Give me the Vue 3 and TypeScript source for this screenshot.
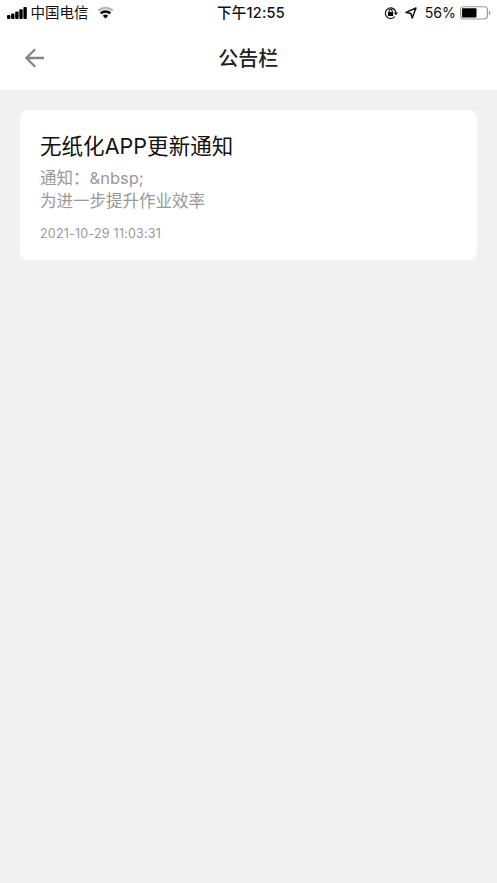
<script setup lang="ts">
interface Notice {
  title: string
  lines: string[]
  time: string
}

const status = { carrier: '中国电信', clock: '下午12:55', battery: '56%' }
const pageTitle = '公告栏'
const notices: Notice[] = [
  {
    title: '无纸化APP更新通知',
    lines: ['通知：&nbsp;', '为进一步提升作业效率'],
    time: '2021-10-29 11:03:31',
  },
]
</script>

<template>
  <div class="screen">
    <header class="top">
      <div class="status">
        <div class="side">
          <svg class="signal" width="20" height="12" viewBox="0 0 20 12">
            <rect x="0" y="8" width="3.4" height="4" rx="1" />
            <rect x="4.1" y="6.4" width="3.4" height="5.6" rx="1" />
            <rect x="8.2" y="4.4" width="3.4" height="7.6" rx="1" />
            <rect x="12.3" y="2.3" width="3.4" height="9.7" rx="1" />
            <rect x="16.4" y="0" width="3.4" height="12" rx="1" />
          </svg>
          <span class="carrier">{{ status.carrier }}</span>
          <svg class="wifi" width="17" height="13" viewBox="0 0 17 13">
            <path d="M1.2 4.7a10.6 10.6 0 0 1 14.6 0" fill="none" stroke="#b9b9b9" stroke-width="2.3" />
            <path d="M3.7 7.4a7 7 0 0 1 9.6 0" fill="none" stroke="#000" stroke-width="2.5" />
            <path d="M5.8 9.7a4 4 0 0 1 5.4 0L8.5 12.6z" />
          </svg>
        </div>
        <span class="clock">{{ status.clock }}</span>
        <div class="side right">
          <svg class="lock" width="14" height="14" viewBox="0 0 14 14">
            <path d="M10.8 10.5A5.3 5.3 0 1 1 11.9 6.5" fill="none" stroke="#111" stroke-width="1.2" />
            <path d="M9.9 6.5h4l-2 2.7z" />
            <rect x="4" y="6" width="5.2" height="4" rx=".5" />
            <path d="M5 6.5V5a1.6 1.6 0 0 1 3.2 0v1.5" fill="none" stroke="#111" stroke-width="1.1" />
          </svg>
          <svg class="locate" width="12" height="12" viewBox="0 0 12 12">
            <path d="M1 5.4L11 1 7.2 11 5.9 6.4z" fill="none" stroke="#111" stroke-width="1.5" stroke-linejoin="round" />
          </svg>
          <span class="percent">{{ status.battery }}</span>
          <svg class="battery" width="31" height="14" viewBox="0 0 31 14">
            <rect x=".6" y=".8" width="26.8" height="12.2" rx="3" fill="#fff" stroke="#999" stroke-width="1.1" />
            <rect x="2" y="2.3" width="14.5" height="9.2" rx="1" />
            <path d="M28.8 4.8q1.7.5 1.7 2.1t-1.7 2.1z" fill="#999" />
          </svg>
        </div>
      </div>
      <div class="nav">
        <svg class="back" width="20" height="20" viewBox="0 0 20 20">
          <path d="M19 10H1.5M10.2 1.2L1.4 10l8.8 8.8" fill="none" stroke="#858585" stroke-width="2.3" />
        </svg>
        <h1>{{ pageTitle }}</h1>
      </div>
    </header>
    <main>
      <article v-for="n in notices" :key="n.time" class="card">
        <h2>{{ n.title }}</h2>
        <p v-for="line in n.lines" :key="line">{{ line }}</p>
        <time>{{ n.time }}</time>
      </article>
    </main>
  </div>
</template>

<style>
body {
  background: #f1f1f1;
}
</style>

<style scoped>
.screen {
  min-height: 883px;
  background: #f1f1f1;
  font-family: Inter, "Noto Sans CJK SC", sans-serif;
  color: #222;
}
svg {
  display: block;
  flex: none;
}
.top {
  height: 90px;
  background: #fff;
}
.status {
  display: grid;
  grid-template-columns: 1fr auto 1fr;
  align-items: center;
  height: 25px;
  padding: 0 6px 0 7px;
  color: #111;
  white-space: nowrap;
}
.side {
  display: flex;
  align-items: center;
}
.right {
  justify-content: flex-end;
}
.carrier {
  margin: 0 8px 0 3.5px;
  font-size: 14.5px;
  line-height: 24px;
}
.clock {
  padding-left: 4px;
  font-size: 14.5px;
  line-height: 24px;
  font-weight: 500;
  letter-spacing: 0.25px;
}
.locate {
  margin: 0 8px 0 7px;
}
.percent {
  margin-right: 4px;
  font-size: 14.2px;
  line-height: 24px;
}
.nav {
  display: grid;
  grid-template-columns: 1fr auto 1fr;
  align-items: center;
  height: 65px;
  padding: 0 25px 0 24.5px;
}
h1 {
  margin: 2px 0 0;
  font-size: 20px;
  line-height: 30px;
  font-weight: 500;
}
main {
  padding: 20px;
}
.card {
  height: 150px;
  padding: 21px 20px 20px;
  box-sizing: border-box;
  border-radius: 8px;
  background: #fff;
}
h2 {
  margin: 0 0 6px;
  font-size: 21.5px;
  line-height: 30px;
  font-weight: 400;
  letter-spacing: 0.05px;
  color: #111;
}
p {
  margin: 0;
  font-size: 16.5px;
  line-height: 23px;
  color: #999;
}
time {
  display: block;
  margin-top: 12px;
  font-size: 12.5px;
  line-height: 18px;
  letter-spacing: 0.22px;
  color: #999;
}
</style>
